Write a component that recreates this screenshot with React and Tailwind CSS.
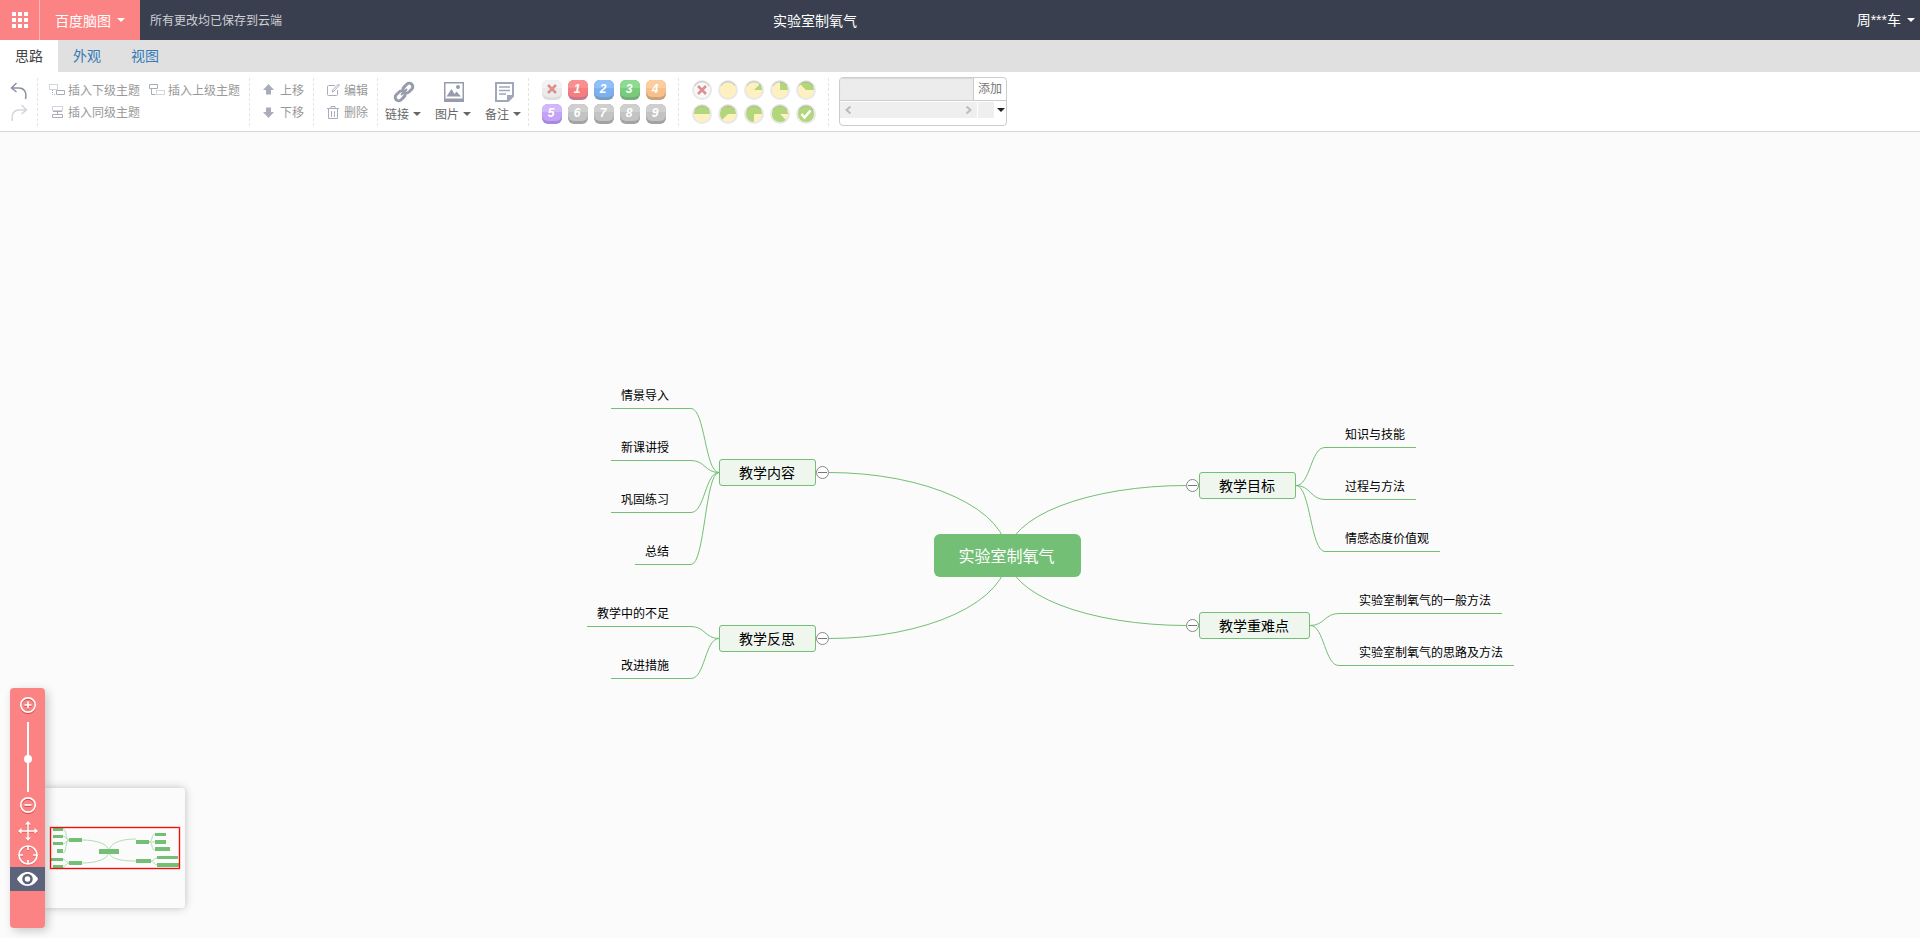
import { clsx } from 'clsx';

const branches = [
  {
    id: 'content', title: '教学内容', x: 319, y: 84, width: 97, side: 'left',
    leaves: [
      { title: '情景导入', x: 211, y: 33 },
      { title: '新课讲授', x: 211, y: 85 },
      { title: '巩固练习', x: 211, y: 137 },
      { title: '总结', x: 235, y: 189 },
    ],
  },
  {
    id: 'reflection', title: '教学反思', x: 319, y: 250, width: 97, side: 'left',
    leaves: [
      { title: '教学中的不足', x: 187, y: 251 },
      { title: '改进措施', x: 211, y: 303 },
    ],
  },
  {
    id: 'goal', title: '教学目标', x: 799, y: 97, width: 97, side: 'right',
    leaves: [
      { title: '知识与技能', x: 925, y: 72 },
      { title: '过程与方法', x: 925, y: 124 },
      { title: '情感态度价值观', x: 925, y: 176 },
    ],
  },
  {
    id: 'key', title: '教学重难点', x: 799, y: 237, width: 111, side: 'right',
    leaves: [
      { title: '实验室制氧气的一般方法', x: 939, y: 238 },
      { title: '实验室制氧气的思路及方法', x: 939, y: 290 },
    ],
  },
];

function leafPath(branch, leaf) {
  const left = branch.side === 'left';
  const y1 = branch.y + 13.5;
  const y2 = leaf.y + 0.5;
  const x1 = left ? branch.x : branch.x + branch.width;
  const x2 = left ? x1 - 28 : x1 + 29;
  const mid = (x1 + x2) / 2;
  return `M${x1} ${y1}C${mid} ${y1} ${mid} ${y2} ${x2} ${y2}`;
}

// quarter of an ellipse from the centre of the root to the branch
function rootPath(branch) {
  const left = branch.side === 'left';
  const y = branch.y + 13.5;
  const above = y < 180.5;
  return `M607.5 180.5A179 ${Math.abs(180.5 - y)} 0 0 ${left === above ? 0 : 1} ${left ? 428.5 : 786.5} ${y}`;
}

function Caret() {
  return (
    <svg className="shrink-0" width="8" height="4" viewBox="0 0 8 4" fill="currentColor" aria-hidden="true">
      <path d="M0 0h8L4 4z" />
    </svg>
  );
}

function Header() {
  return (
    <header className="flex h-10 items-stretch bg-[#3a3f4f] text-white">
      <div className="flex w-2/5 shrink-0 items-stretch">
        <button type="button" aria-label="应用" className="flex w-10 items-center justify-center border-r border-[#fdb5b5] bg-[#fc8383]">
          <svg width="16" height="16" viewBox="0 0 16 16" fill="#fff" aria-hidden="true">
            <path d="M0 0h4v4H0zM6 0h4v4H6zM12 0h4v4h-4zM0 6h4v4H0zM6 6h4v4H6zM12 6h4v4h-4zM0 12h4v4H0zM6 12h4v4H6zM12 12h4v4h-4z" />
          </svg>
        </button>
        <button type="button" className="flex w-[100px] items-center gap-[6px] bg-[#fc8383] pl-[15px] text-sm">
          百度脑图
          <Caret />
        </button>
        <span className="self-center pl-[10px] text-xs text-[#cfd1d6]">所有更改均已保存到云端</span>
      </div>
      <h1 className="self-center pl-[5px] text-sm">实验室制氧气</h1>
      <button type="button" className="ml-auto flex items-center gap-[6px] pr-[5px] font-['Liberation_Sans','Noto_Sans_CJK_SC',sans-serif] text-sm">
        周***车
        <Caret />
      </button>
    </header>
  );
}

function Tabs() {
  return (
    <nav className="flex h-8 bg-[#e0e0e0] text-sm leading-[30px]">
      <a href="#idea" className="bg-white px-[15px] text-[#444]">思路</a>
      <a href="#appearance" className="px-[15px] text-[#337ab7]">外观</a>
      <a href="#view" className="px-[15px] text-[#337ab7]">视图</a>
    </nav>
  );
}

function Group({ className, children }) {
  return (
    <div className={clsx('flex h-12 shrink-0 items-center border-r border-dashed border-[#e4e4e4]', className)}>
      {children}
    </div>
  );
}

const toolIcons = {
  child: (
    <>
      <path d="M.5.5h8v5h-8zM3.500 6v4.500h3" strokeDasharray="1 1" />
      <path d="M7.500 6.500h8v4h-8z" />
    </>
  ),
  parent: (
    <>
      <path d="M.5.5h8v4h-8zM2.500 5v5.500h4" />
      <path d="M7.500 6.500h8v4h-8z" strokeDasharray="1 1" />
    </>
  ),
  sibling: (
    <>
      <path d="M3.500.5h10v4h-10z" strokeDasharray="1 1" />
      <path d="M4 5.500h9M8.500 5.500v3M3.500 8.500h10v3h-10z" />
    </>
  ),
  up: <path d="M7.500 0 13 6h-3v4.500H5V6H2z" fill="#a9adba" stroke="none" />,
  down: <path d="M7.500 12 13 6h-3V1.500H5V6H2z" fill="#a9adba" stroke="none" />,
  edit: (
    <>
      <path d="M10 1.500H3.500a1 1 0 0 0-1 1v8a1 1 0 0 0 1 1h8a1 1 0 0 0 1-1V6" />
      <path d="m7 8 1-2.500L13.500 0l1 1L9 7z" />
    </>
  ),
  remove: <path d="M2 2.500h12M6 2.500v-2h4v2M3.500 2.500v10h9v-10M6.500 5v6M9.500 5v6" />,
};

function Tool({ icon, children }) {
  return (
    <button type="button" className="flex h-[22px] items-center gap-[3px] text-xs text-[#999]">
      <svg className="overflow-visible" width="16" height="12" viewBox="0 0 16 12" fill="none" stroke="#a9adba" aria-hidden="true">
        {toolIcons[icon]}
      </svg>
      {children}
    </button>
  );
}

function BigTool({ label, children }) {
  return (
    <button type="button" className="flex w-[50px] shrink-0 flex-col items-start text-xs text-[#666]">
      <svg className="ml-2" width="22" height="22" viewBox="0 0 22 22" aria-hidden="true">{children}</svg>
      <span className="flex items-center gap-1 leading-[22px]">
        {label}
        <Caret />
      </span>
    </button>
  );
}

const priorities = [
  { label: '1', top: '#fb8f8f', face: '#f57f80', base: '#c87888' },
  { label: '2', top: '#90c0fa', face: '#7cb0f0', base: '#789dc4' },
  { label: '3', top: '#8ddb91', face: '#79cc7e', base: '#74ad76' },
  { label: '4', top: '#fccd9f', face: '#f7bf8a', base: '#c9a27c' },
  { label: '5', top: '#d3b7fb', face: '#c3a2f8', base: '#a48bdd' },
  { label: '6' },
  { label: '7' },
  { label: '8' },
  { label: '9' },
];

function PriorityIcon({ top = '#cfcfcf', face = '#c3c3c3', base = '#a3a3a3', label }) {
  return (
    <svg width="20" height="20" viewBox="0 0 20 20" aria-hidden="true">
      <rect width="20" height="20" rx="6" fill={base} />
      <rect width="20" height="17" rx="6" fill={face} />
      <path d="M0 8V6a6 6 0 0 1 6-6h8a6 6 0 0 1 6 6v2z" fill={top} />
      {label ? (
        <text x="9" y="13" textAnchor="middle" fill="#fff" className="font-['Liberation_Sans'] text-xs font-bold italic">{label}</text>
      ) : (
        <path d="m6 5 8 8M14 5l-8 8" stroke="#dd8f90" strokeWidth="2.5" />
      )}
    </svg>
  );
}

const progress = [
  { label: '移除进度', face: '#f8f8f8', cross: true },
  { label: '未开始' },
  { label: '完成 1/8', slice: 'M10 10l5.700-5.700A8 8 0 0 1 18 10z' },
  { label: '完成 1/4', slice: 'M10 10V2A8 8 0 0 1 18 10z' },
  { label: '完成 3/8', slice: 'M10 10 4.300 4.300A8 8 0 0 1 18 10z' },
  { label: '完成一半', slice: 'M2 10A8 8 0 0 1 18 10z' },
  { label: '完成 5/8', slice: 'M10 10H18A8 8 0 1 0 4.300 15.700z' },
  { label: '完成 3/4', slice: 'M10 10H18A8 8 0 1 0 10 18z' },
  { label: '完成 7/8', slice: 'M10 10H18A8 8 0 1 0 15.700 15.700z' },
  { label: '已完成', face: '#b2d67c', check: true },
];

function ProgressIcon({ face = '#fff0c0', slice, cross, check }) {
  return (
    <svg width="20" height="20" viewBox="0 0 20 20" aria-hidden="true">
      <circle cx="10" cy="10" r="9" fill={face} stroke="#e8e8e8" strokeWidth="2" />
      {slice && <path d={slice} fill="#b2d67c" />}
      {cross && <path d="m6 6 8 8M14 6l-8 8" stroke="#dd8f90" strokeWidth="2.5" />}
      {check && <path d="m5.500 10 3 3.500 6-7" fill="none" stroke="#fff" strokeWidth="2.5" />}
      <path d="M3 6a8 8 0 0 1 14 0" fill="none" stroke="#000" strokeOpacity=".18" />
    </svg>
  );
}

function Resource() {
  return (
    <form className="ml-[10px] flex h-[49px] w-[168px] shrink-0 flex-col overflow-hidden rounded border border-[#ccc] bg-white">
      <div className="flex h-[23px] border-b border-[#ccc]">
        <input aria-label="资源" className="min-w-0 flex-1 border-r border-[#ccc] bg-[#ececec] px-1 text-xs shadow-[inset_0_1px_1px_rgba(0,0,0,0.08)]" />
        <button type="button" className="w-8 pb-[2px] text-xs text-[#777]">添加</button>
      </div>
      <div className="flex h-[17px] items-stretch pt-px">
        <div className="flex w-[137px] items-center justify-between bg-[#efefef] px-[5px] text-[#bbb]">
          <button type="button" aria-label="向左">
            <svg width="7" height="8" viewBox="0 0 7 8" fill="none" stroke="currentColor" strokeWidth="2"><path d="M5.500.5 1.500 4l4 3.500" /></svg>
          </button>
          <button type="button" aria-label="向右">
            <svg width="7" height="8" viewBox="0 0 7 8" fill="none" stroke="currentColor" strokeWidth="2"><path d="m1.500.5 4 3.500-4 3.500" /></svg>
          </button>
        </div>
        <div className="ml-px w-4 bg-[#efefef]" />
        <button type="button" aria-label="展开" className="flex flex-1 items-center justify-end pr-px text-[#222]">
          <Caret />
        </button>
      </div>
    </form>
  );
}

function Toolbar() {
  return (
    <div className="flex h-[60px] items-center overflow-hidden border-b border-[#d8d8d8] bg-white">
      <Group className="w-[38px] flex-col justify-center gap-1 pl-px">
        <button type="button" aria-label="撤销">
          <svg width="18" height="18" viewBox="0 0 18 18" fill="none" stroke="#8b91a3" strokeWidth="1.5" aria-hidden="true">
            <path d="M6.500 1 1.500 6l5 4M1.500 6H9c5 0 8 4 6.500 11" />
          </svg>
        </button>
        <button type="button" aria-label="重做">
          <svg width="18" height="18" viewBox="0 0 18 18" fill="none" stroke="#d3d6dd" strokeWidth="1.5" aria-hidden="true">
            <path d="m11.500 1 5 5-5 4M16.500 6H9c-5 0-8 4-6.500 11" />
          </svg>
        </button>
      </Group>
      <Group className="w-[212px] flex-wrap content-center gap-x-[9px] pb-[2px] pl-[11px]">
        <Tool icon="child">插入下级主题</Tool>
        <Tool icon="parent">插入上级主题</Tool>
        <Tool icon="sibling">插入同级主题</Tool>
      </Group>
      <Group className="w-16 flex-wrap content-center pb-[2px] pl-[11px]">
        <Tool icon="up">上移</Tool>
        <Tool icon="down">下移</Tool>
      </Group>
      <Group className="w-16 flex-wrap content-center pb-[2px] pl-[11px]">
        <Tool icon="edit">编辑</Tool>
        <Tool icon="remove">删除</Tool>
      </Group>
      <Group className="w-[151px] pl-[7px] pt-[2px]">
        <BigTool label="链接">
          <g fill="none" stroke="#979cad" strokeWidth="3">
            <rect x="-5" y="-3.5" width="11" height="7" rx="3.5" transform="translate(14.5 7.5) rotate(-45)" />
            <rect x="-6" y="-3.5" width="11" height="7" rx="3.5" transform="translate(7.5 14.5) rotate(-45)" />
          </g>
          <path d="m8 14 6-6" stroke="#979cad" strokeWidth="2" />
        </BigTool>
        <BigTool label="图片">
          <path d="M1 1h20v20H1zM2.500 2.500v15h17v-15z" fill="#979cad" fillRule="evenodd" />
          <path d="M3.500 15.500 8.500 8l3 5 2-2.500 4.500 5z" fill="#979cad" />
          <circle cx="15" cy="6" r="2" fill="#979cad" />
        </BigTool>
        <BigTool label="备注">
          <path d="M2 1h19v14.500L15.500 21H2zM4 3v16h10v-5h5V3z" fill="#a1a6b8" fillRule="evenodd" />
          <path d="M6 6h11M6 9.500h11M6 13h7" stroke="#a1a6b8" strokeWidth="1.5" />
        </BigTool>
      </Group>
      <Group className="w-[150px] pl-[13px]">
        <div className="grid grid-cols-5 gap-x-[6px] gap-y-1">
          <button type="button" aria-label="移除优先级">
            <PriorityIcon top="#f3f3f3" face="#ebebeb" base="#dedede" />
          </button>
          {priorities.map((item) => (
            <button key={item.label} type="button" aria-label={`优先级 ${item.label}`}>
              <PriorityIcon {...item} />
            </button>
          ))}
        </div>
      </Group>
      <Group className="w-[150px] pl-[13px]">
        <div className="grid grid-cols-5 gap-x-[6px] gap-y-1">
          {progress.map(({ label, ...icon }) => (
            <button key={label} type="button" aria-label={label}>
              <ProgressIcon {...icon} />
            </button>
          ))}
        </div>
      </Group>
      <Resource />
    </div>
  );
}

function MindMap() {
  return (
    <div className="relative h-[320px] w-[1120px] shrink-0 text-black">
      <svg className="absolute inset-0" width="1120" height="320" fill="none" stroke="#73bf76" aria-hidden="true">
        {branches.map((branch) => (
          <g key={branch.id}>
            <path d={rootPath(branch)} />
            {branch.leaves.map((leaf) => (
              <path key={leaf.title} d={leafPath(branch, leaf)} />
            ))}
          </g>
        ))}
      </svg>
      <div className="absolute left-[534px] top-[159px] flex h-[43px] w-[147px] items-center justify-center rounded-md bg-[#73bf76] pr-[2px] pb-[2px] text-base text-white">
        实验室制氧气
      </div>
      {branches.map((branch) => (
        <div key={branch.id}>
          <div
            className="absolute flex h-[27px] items-center rounded-[3px] border border-[#73bf76] bg-[#eff6ee] pb-[2px] pl-[19px] text-sm whitespace-nowrap"
            style={{ left: branch.x, top: branch.y, width: branch.width }}
          >
            {branch.title}
          </div>
          <button
            type="button"
            aria-label="收起"
            className="absolute flex size-[13px] items-center justify-center rounded-full border border-[#888] bg-white"
            style={{ left: branch.side === 'left' ? 416 : 786, top: branch.y + 7 }}
          >
            <span className="h-px w-[9px] bg-[#777]" />
          </button>
          {branch.leaves.map((leaf) => (
            <div
              key={leaf.title}
              className={clsx(
                'absolute h-[25px] border-b border-[#73bf76] text-xs leading-[22px] whitespace-nowrap',
                branch.side === 'left' ? 'pl-[10px] pr-[22px]' : 'pl-5 pr-[11px]',
              )}
              style={{ left: leaf.x, top: leaf.y - 24 }}
            >
              {leaf.title}
            </div>
          ))}
        </div>
      ))}
    </div>
  );
}

function Navigator() {
  return (
    <div className="mb-5 h-[120px] w-[140px] rounded-r-sm bg-[#fbfbfb] shadow-[0_0_8px_rgba(0,0,0,0.25)]">
      <svg width="140" height="120" viewBox="0 0 140 120" aria-hidden="true">
        <g fill="none" stroke="#b4dcb6">
          <path d="M37 52c15 0 26 4 27 11 1-8 12-12 27-12M37 75c15 0 26-4 27-11 1 7 12 9 27 9" />
          <path d="M18 41c4 0 2 11 6 11-4 0-2 13-6 13M18 48c3 0 3 4 6 4-3 0-3 4-6 4" />
          <path d="M18 71c3 0 3 4 6 4-3 0-3 4-6 4" />
          <path d="M110 46c-4 0-2 8-6 8 4 0 2 8 6 8M104 54h6M112 70c-3 0-3 3-6 3 3 0 3 4 6 4" />
        </g>
        <g fill="#73bf76">
          <path d="M8 40h10v3H8zM8 47h10v3H8zM8 54h10v3H8zM12 61h6v4h-6zM6 70h12v3H6zM8 77h10v3H8z" />
          <path d="M24 50h13v4H24zM24 73h13v4H24zM54 61h20v5H54zM91 52h13v4H91zM91 71h15v4H91z" />
          <path d="M110 45h11v3h-11zM110 52h11v4h-11zM110 59h15v4h-15zM112 68h21v3h-21zM112 75h23v4h-23z" />
        </g>
        <path d="M5.500 39.500h129v41h-129z" fill="none" stroke="#ff0000" strokeOpacity=".35" strokeWidth="2" />
        <path d="M5.500 39.500h129v41h-129z" fill="none" stroke="#f20d0d" />
      </svg>
    </div>
  );
}

function Dock() {
  return (
    <div className="relative z-10 flex h-60 w-[35px] flex-col items-center rounded bg-[#fc8383] pt-2 shadow-[3px_3px_10px_rgba(0,0,0,0.2)]">
      <button type="button" aria-label="放大" className="pl-px">
        <svg width="18" height="18" viewBox="0 0 18 18" fill="none" stroke="#fff" strokeWidth="1.7" className="drop-shadow-[0_1px_0_rgba(200,40,40,0.7)]">
          <circle cx="9" cy="9" r="7.2" />
          <path d="M5.500 9h7M9 5.500v7" />
        </svg>
      </button>
      <input
        type="range"
        aria-label="缩放"
        defaultValue="53"
        className="ml-px mt-2 h-[70px] w-2 appearance-none bg-[linear-gradient(white,white)] bg-[length:2px_100%] bg-center bg-no-repeat [writing-mode:vertical-lr] [&::-webkit-slider-thumb]:size-2 [&::-webkit-slider-thumb]:appearance-none [&::-webkit-slider-thumb]:rounded-full [&::-webkit-slider-thumb]:bg-white"
      />
      <button type="button" aria-label="缩小" className="mt-1 pl-px">
        <svg width="18" height="18" viewBox="0 0 18 18" fill="none" stroke="#fff" strokeWidth="1.7" className="drop-shadow-[0_1px_0_rgba(200,40,40,0.7)]">
          <circle cx="9" cy="9" r="7.2" />
          <path d="M5.500 9h7" />
        </svg>
      </button>
      <button type="button" aria-label="拖动" className="mt-[7px] pl-px">
        <svg width="20" height="20" viewBox="0 0 20 20" fill="#fff" className="drop-shadow-[0_1px_0_rgba(200,40,40,0.4)]">
          <path d="M1 10h18M10 1v18" stroke="#fff" strokeWidth="1.5" />
          <path d="M10 0 7 3.500h6zM10 20l-3-3.500h6zM0 10l3.500-3v6zM20 10l-3.500-3v6z" />
        </svg>
      </button>
      <button type="button" aria-label="定位根节点" className="mt-1 pl-px">
        <svg width="20" height="20" viewBox="0 0 20 20" fill="none" stroke="#fff" strokeWidth="1.7" className="drop-shadow-[0_1px_0_rgba(200,40,40,0.4)]">
          <circle cx="10" cy="10" r="9" />
          <path d="M10 1v4M10 15v4M1 10h4M15 10h4" />
        </svg>
      </button>
      <button type="button" aria-label="导航器" className="mt-[2px] flex h-6 w-full items-center justify-center bg-[#5c637a]">
        <svg width="21" height="14" viewBox="0 0 21 14">
          <path d="M0 7C5-2.300 16-2.300 21 7c-5 9.300-16 9.300-21 0z" fill="#fff" />
          <circle cx="10.5" cy="7" r="4" fill="#fff" stroke="#5c637a" strokeWidth="2.5" />
        </svg>
      </button>
    </div>
  );
}

export default function App() {
  return (
    <div className="flex min-h-screen flex-col font-['Noto_Sans_CJK_SC',sans-serif]">
      <Header />
      <Tabs />
      <Toolbar />
      <main className="relative flex flex-1 items-center justify-center overflow-hidden bg-[#fbfbfb]">
        <MindMap />
        <div className="absolute bottom-[10px] left-[10px] flex items-end">
          <Dock />
          <Navigator />
        </div>
      </main>
    </div>
  );
}
